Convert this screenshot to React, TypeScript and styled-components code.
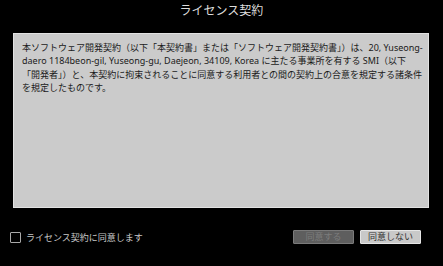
import React from "react";
import styled, { createGlobalStyle } from "styled-components";

const Global = createGlobalStyle`
  html, body { margin: 0; padding: 0; background: #000; }
  body { font-family: "Noto Sans", "Noto Sans CJK JP", sans-serif; }
`;

const Screen = styled.div`
  width: 443px;
  height: 266px;
  background: #000;
  display: flex;
  flex-direction: column;
  overflow: hidden;
`;

const Header = styled.header`
  height: 33px;
  display: flex;
  justify-content: center;
  align-items: flex-start;
  box-sizing: border-box;
  padding-top: 2px;
`;

const Title = styled.h1`
  margin: 0;
  font-size: 12px;
  line-height: 16px;
  font-weight: normal;
  color: #dcdcdc;
  font-family: "Noto Sans CJK JP", sans-serif;
`;

const Panel = styled.div`
  margin: 0 14px 0 13px;
  height: 175px;
  box-sizing: border-box;
  background: #cbcbcb;
  border: 1px solid #e2e2e2;
  padding: 7px 5px 7px 8px;
`;

const Body = styled.p`
  margin: 0;
  font-size: 9px;
  line-height: 13.4px;
  color: #1a1a1a;
  font-family: "Noto Sans", "Noto Sans CJK JP", sans-serif;
`;

const Footer = styled.footer`
  flex: 1;
  display: flex;
  align-items: center;
  padding: 0 22px 0 10px;
`;

const CheckLabel = styled.label`
  display: flex;
  align-items: center;
  gap: 5px;
  font-size: 9px;
  color: #c8c8c8;
  font-family: "Noto Sans CJK JP", sans-serif;
`;

const Box = styled.span`
  width: 11px;
  height: 11px;
  box-sizing: border-box;
  border: 1.5px solid #a8a8a8;
  border-radius: 1px;
`;

const Buttons = styled.div`
  margin-left: auto;
  display: flex;
  gap: 6px;
`;

const Button = styled.button<{ $disabled?: boolean }>`
  width: 61px;
  height: 14px;
  padding: 0;
  box-sizing: border-box;
  font-size: 9px;
  line-height: 12px;
  font-family: "Noto Sans CJK JP", sans-serif;
  border-radius: 1px;
  border: 1px solid ${(p) => (p.$disabled ? "#7a7a7a" : "#e6e6e6")};
  background: ${(p) => (p.$disabled ? "#5e5e5e" : "#c9c9c9")};
  color: ${(p) => (p.$disabled ? "#7c7c7c" : "#333")};
`;

export default function App() {
  return (
    <Screen>
      <Global />
      <Header>
        <Title>ライセンス契約</Title>
      </Header>
      <Panel>
        <Body>
          本ソフトウェア開発契約（以下「本契約書」または「ソフトウェア開発契約書」）は、20, Yuseong-daero 1184beon-gil, Yuseong-gu, Daejeon, 34109, Korea に主たる事業所を有する SMI（以下「開発者」）と、本契約に拘束されることに同意する利用者との間の契約上の合意を規定する諸条件を規定したものです。
        </Body>
      </Panel>
      <Footer>
        <CheckLabel>
          <Box />
          ライセンス契約に同意します
        </CheckLabel>
        <Buttons>
          <Button $disabled disabled>同意する</Button>
          <Button>同意しない</Button>
        </Buttons>
      </Footer>
    </Screen>
  );
}
